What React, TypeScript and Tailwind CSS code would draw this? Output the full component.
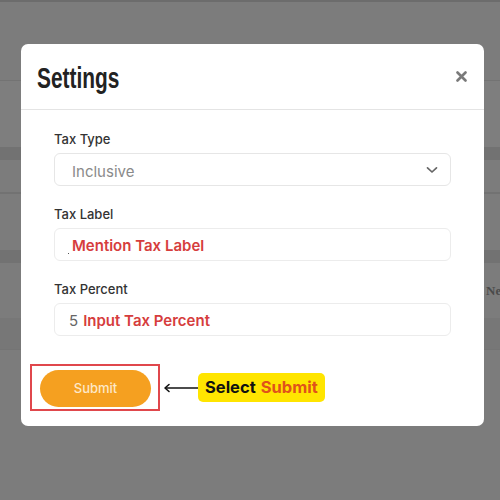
import React from "react";

const Background = () => {
  return (
    <div className="flex flex-col h-[500px] bg-[#7c7c7c]">
      <div className="h-[2px] bg-[#6c6c6c]" />
      <div className="h-[78px]" />
      <div className="h-[67px] border-t border-[#737373] bg-[#7e7e7e]" />
      <div className="h-[13px] bg-[#727272]" />
      <div className="h-[34px] border-b-2 border-[#727272]" />
      <div className="h-[56px]" />
      <div className="h-[13px] bg-[#727272]" />
      <div className="h-[55px] flex items-center overflow-hidden whitespace-nowrap">
        <span className="ml-[486px] text-[13px] font-bold text-[#4a4a4a] font-['Liberation_Serif',serif]">
          Ne
        </span>
      </div>
      <div className="h-[32px] bg-[#777777] border-b border-[#747474]" />
      <div className="flex-1" />
    </div>
  );
};

const App = () => {
  return (
    <div className="relative w-[500px] h-[500px] overflow-hidden font-['Inter',sans-serif]">
      <Background />

      {/* modal */}
      <div className="absolute inset-0 pl-[21px] pt-[44px]">
        <div className="w-[463px] h-[382px] bg-white rounded-[7px] flex flex-col">
          {/* header */}
          <div className="h-[66px] border-b border-[#e4e4e4] flex items-center justify-between pl-[16px] pr-[17px]">
            <h2 className="inline-block origin-left scale-x-[0.72] text-[29px] leading-none font-bold text-[#222] font-['Liberation_Sans',sans-serif] mt-[3px]">
              Settings
            </h2>
            <svg width="11" height="11" viewBox="0 0 11 11" className="mb-[1px]">
              <path d="M1.5 1.5 L9.5 9.5 M9.5 1.5 L1.5 9.5" stroke="#7a7a7a" strokeWidth="2.6" strokeLinecap="round" />
            </svg>
          </div>

          {/* body */}
          <div className="px-[33px] pt-[20px] flex flex-col">
            <label className="h-[18px] leading-[18px] text-[13px] font-medium text-[#333]">Tax Type</label>
            <div className="mt-[5px] h-[33px] border border-[#e6e6e6] rounded-[6px] flex items-center justify-between pl-[17px] pr-[12px]">
              <span className="text-[15px] text-[#8a8a8a] mt-[6px]">Inclusive</span>
              <svg width="12" height="8" viewBox="0 0 12 8">
                <path d="M1.5 1.8 L6 6 L10.5 1.8" fill="none" stroke="#666" strokeWidth="1.7" strokeLinecap="round" strokeLinejoin="round" />
              </svg>
            </div>

            <label className="mt-[19px] h-[18px] leading-[18px] text-[13px] font-medium text-[#333]">Tax Label</label>
            <div className="mt-[5px] h-[33px] border border-[#ececec] rounded-[6px] flex items-center pl-[13px]">
              <span className="w-[1px] h-[1px] bg-[#555] mt-[18px] mr-[3px]" />
              <span className="text-[15px] font-semibold text-[#d63d3d] mt-[3px]">Mention Tax Label</span>
            </div>

            <label className="mt-[19px] h-[18px] leading-[18px] text-[13px] font-medium text-[#333]">Tax Percent</label>
            <div className="mt-[5px] h-[33px] border border-[#ececec] rounded-[6px] flex items-center pl-[14px] gap-[5px] pt-[3px]">
              <span className="text-[15px] text-[#666]">5</span>
              <span className="text-[15px] font-semibold text-[#d63d3d]">Input Tax Percent</span>
            </div>
          </div>

          {/* footer */}
          <div className="mt-[28px] pl-[9px] flex items-center">
            <div className="border-2 border-[#e0474c] pl-[8px] pt-[4px] pr-[7px] pb-[2px]">
              <button className="w-[111px] h-[37px] rounded-full bg-[#f5a020] text-[13px] font-medium text-[#fde8c8]">
                Submit
              </button>
            </div>
            <svg width="35" height="10" viewBox="0 0 35 10" className="ml-[3px]">
              <path d="M2 5 H35" stroke="#111" strokeWidth="1.6" />
              <path d="M6 1.5 L2 5 L6 8.5" fill="none" stroke="#111" strokeWidth="1.6" strokeLinecap="round" strokeLinejoin="round" />
            </svg>
            <div className="h-[29px] rounded-[5px] bg-[#ffe500] px-[7px] flex items-center text-[16.5px] font-bold">
              <span className="text-[#111]">Select</span>
              <span className="ml-[5px] text-[#e0521a]">Submit</span>
            </div>
          </div>
        </div>
      </div>
    </div>
  );
};

export default App;
